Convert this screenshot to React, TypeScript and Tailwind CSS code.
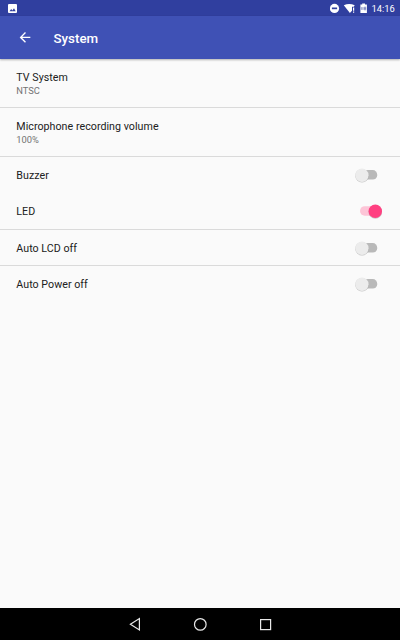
import React from "react";

type Item = {
  title: string;
  summary?: string;
  on?: boolean;
  divider?: boolean;
  height: string;
};

const items: Item[] = [
  { title: "TV System", summary: "NTSC", divider: true, height: "h-[49px]" },
  { title: "Microphone recording volume", summary: "100%", divider: true, height: "h-[49px]" },
  { title: "Buzzer", on: false, height: "h-9" },
  { title: "LED", on: true, divider: true, height: "h-[37px]" },
  { title: "Auto LCD off", on: false, divider: true, height: "h-9 pt-[1px]" },
  { title: "Auto Power off", on: false, height: "h-9" },
];

function Toggle({ on }: { on: boolean }) {
  return (
    <svg width="32" height="20" viewBox="0 0 32 20" role="switch" aria-checked={on}>
      {on ? (
        <>
          <rect x="6" y="5.2" width="20" height="9.5" rx="4.75" fill="#fdc5d7" />
          <circle cx="21.3" cy="10.9" r="6.8" fill="#000" opacity="0.2" />
          <circle cx="21.3" cy="10.2" r="6.7" fill="#ff4081" />
        </>
      ) : (
        <>
          <rect x="2" y="5.1" width="21.2" height="9.5" rx="4.4" fill="#b9b9b9" />
          <circle cx="8" cy="10.8" r="6.8" fill="#000" opacity="0.22" />
          <circle cx="8" cy="10.2" r="6.7" fill="#ececec" />
        </>
      )}
    </svg>
  );
}

function StatusBar() {
  return (
    <div className="flex h-4 shrink-0 items-center justify-between bg-[#303f9f] pl-2 pr-[5px] text-white">
      <svg width="9" height="16" viewBox="0 0 9 16">
        <rect x="0" y="4" width="9" height="9" rx="1" fill="#fff" />
        <path d="M1.5 11.3 3.2 9l1.2 1.4L6 8.3l1.7 3z" fill="#303f9f" />
      </svg>
      <div className="flex items-center">
        <svg width="40" height="16" viewBox="330 0 40 16" fill="#fff">
          <circle cx="334.5" cy="8.4" r="4.6" />
          <rect x="331.9" y="7.5" width="5.2" height="1.7" fill="#303f9f" />
          <path d="M343.8 5.3Q349.2 2.6 354.7 5.3L353.8 6.7H352V10.8L349.9 13z" />
          <path d="M353 7.6h1.2v3.1H353zM353 11.5h1.2v1.2H353z" />
          <path d="M362.2 3.6h2.8v1h1.9v8.3h-6.5V4.6h1.8z" />
          <path d="M361.7 7.1v2.8M363 7.1v2.8M364.4 7.1v2.8h1.3V7.1zM364.4 8.5h1.3" fill="none" stroke="#6570b5" strokeWidth=".7" />
        </svg>
        <span className="w-[25px] whitespace-nowrap pl-[1.5px] pt-[1px] text-[9.33px] leading-4">14:16</span>
      </div>
    </div>
  );
}

export default function App() {
  return (
    <div className="flex h-[640px] w-[400px] flex-col overflow-hidden bg-[#fafafa] font-['Roboto',sans-serif] text-[#212121]">
      <StatusBar />
      <header className="z-10 flex h-[42.67px] shrink-0 items-center bg-[#3f51b5] pl-[16.5px] text-white shadow-[0_1px_2px_rgba(0,0,0,0.3)]">
        <svg width="16" height="16" viewBox="0 -0.6 24 24" fill="#fff">
          <path d="M20 11H7.83l5.59-5.59L12 4l-8 8 8 8 1.41-1.41L7.83 13H20v-2z" />
        </svg>
        <h1 className="pl-[21px] pt-[4px] text-[13.33px] font-medium leading-5">System</h1>
      </header>
      <main className="min-h-0 flex-1">
        {items.map((item) => (
          <div
            key={item.title}
            className={`${item.height} flex items-center justify-between border-[#dadada] pl-[16.3px] pr-[14px] ${item.divider ? "border-b" : ""}`}
          >
            <div className="pt-[2px]">
              <div className="text-[10.67px] leading-[14px] tracking-[0.04px]">{item.title}</div>
              {item.summary && <div className="text-[9.33px] leading-3 text-[#737373]">{item.summary}</div>}
            </div>
            {item.on !== undefined && <Toggle on={item.on} />}
          </div>
        ))}
      </main>
      <nav className="flex h-8 shrink-0 items-center justify-center bg-black">
        <svg width="160" height="32" viewBox="120 608 160 32" fill="none" stroke="#e8e8e8" strokeWidth="1.2">
          <path d="M139.4 618.6v11.4l-9-5.7z" />
          <circle cx="200.3" cy="624.4" r="5.8" />
          <rect x="260.6" y="619.6" width="10" height="10" />
        </svg>
      </nav>
    </div>
  );
}
